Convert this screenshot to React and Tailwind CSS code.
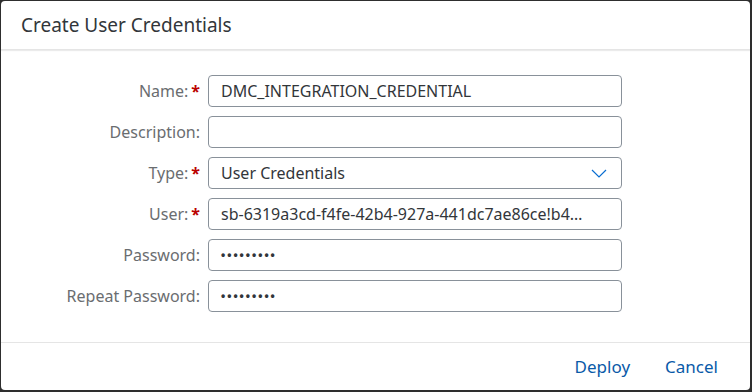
const fields = [
  { label: 'Name:', required: true, value: 'DMC_INTEGRATION_CREDENTIAL' },
  { label: 'Description:', value: '' },
  { label: 'Type:', required: true, value: 'User Credentials', select: true },
  { label: 'User:', required: true, value: 'sb-6319a3cd-f4fe-42b4-927a-441dc7ae86ce!b4…' },
  { label: 'Password:', value: '•••••••••', secret: true },
  { label: 'Repeat Password:', value: '•••••••••', secret: true },
];

function Field({ label, required, value, select, secret }) {
  return (
    <div className="flex items-center h-8">
      <div className="w-[199px] shrink-0 flex justify-end items-center text-[16px] text-[#6a6d70]">
        <span>{label}</span>
        {required && <span className="ml-[3px] text-[#bb0000] font-bold">*</span>}
      </div>
      <div className="ml-[8px] w-[414px] h-8 rounded-[4px] border border-[#89919a] bg-white flex items-center pl-3 pr-[14px]">
        <span
          className={
            secret
              ? 'flex-1 text-[12px] tracking-[2px] text-[#32363a] font-bold font-["Liberation_Sans",Arial,sans-serif]'
              : 'flex-1 min-w-0 overflow-hidden text-ellipsis whitespace-nowrap text-[16px] text-[#32363a]'
          }
        >
          {value}
        </span>
        {select && (
          <svg width="16" height="9" viewBox="0 0 16 9" className="shrink-0">
            <polyline points="1,1 8,8 15,1" fill="none" stroke="#0a6ed1" strokeWidth="1.2" />
          </svg>
        )}
      </div>
    </div>
  );
}

export default function App() {
  return (
    <div className="w-[752px] h-[392px] bg-[#2e2e2e] pl-px pt-px font-['Noto_Sans',Arial,sans-serif]">
      <div className="w-[749px] h-[389px] bg-white rounded-[4px] flex flex-col overflow-hidden">
        <div className="h-[49px] shrink-0 flex items-center pl-5 border-b border-[#e5e5e5] shadow-[0_1px_1px_rgba(0,0,0,0.08)]">
          <h1 className="text-[19px] text-[#32363a]">Create User Credentials</h1>
        </div>
        <div className="flex-1 pt-[25px] flex flex-col gap-[9px]">
          {fields.map(f => (
            <Field key={f.label} {...f} />
          ))}
        </div>
        <div className="h-[48px] shrink-0 border-t border-[#e5e5e5] flex items-center justify-end pr-[32px] gap-[35px] text-[17px] text-[#0a5aa8]">
          <button>Deploy</button>
          <button>Cancel</button>
        </div>
      </div>
    </div>
  );
}
